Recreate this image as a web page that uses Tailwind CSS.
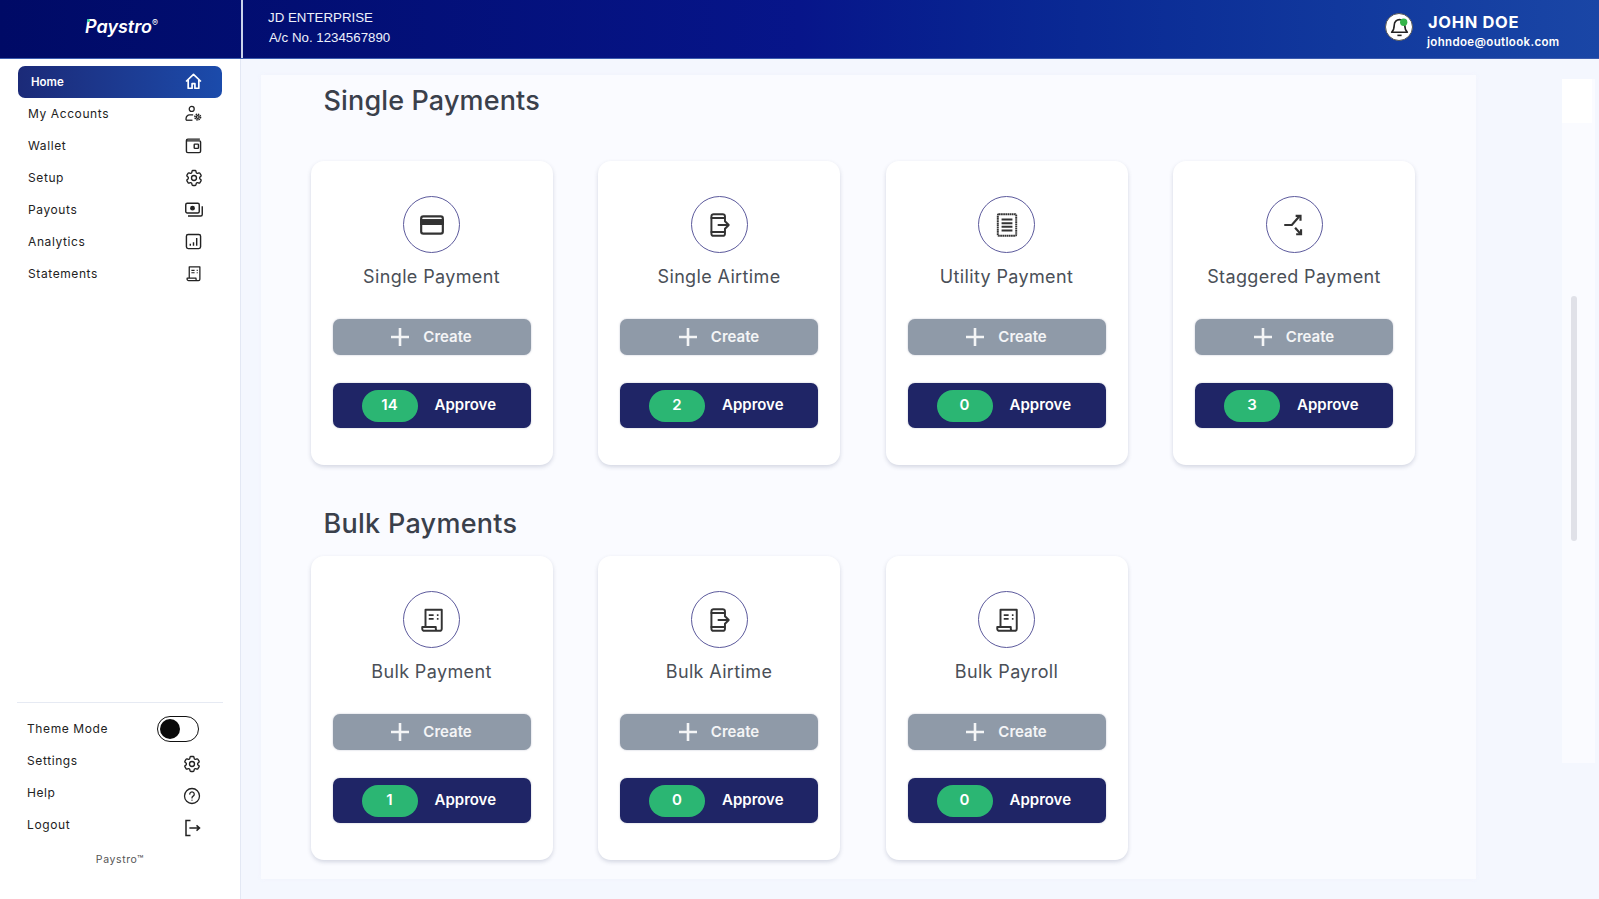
<!DOCTYPE html>
<html lang="en">
<head>
  <meta charset="utf-8">
  <title>Paystro</title>
  <script src="https://cdn.jsdelivr.net/npm/@tailwindcss/browser@4"></script>
</head>
<body class="w-[1599px] h-[899px] overflow-hidden bg-[#f4f7fe] font-['Inter',sans-serif]">

  <!-- Shared icons -->
  <svg class="hidden">
    <symbol id="i-gear" viewBox="0 0 24 24" fill="none" stroke="currentColor" stroke-width="1.6">
      <path d="M9.594 3.940c.090-.542.560-.940 1.110-.940h2.593c.550 0 1.020.398 1.110.940l.213 1.281c.063.374.313.686.645.870.074.040.147.083.220.127.325.196.720.257 1.075.124l1.217-.456a1.125 1.125 0 0 1 1.370.490l1.296 2.247a1.125 1.125 0 0 1-.260 1.431l-1.003.827c-.293.241-.438.613-.430.992a7.723 7.723 0 0 1 0 .255c-.008.378.137.750.430.991l1.004.827c.424.350.534.955.260 1.430l-1.298 2.247a1.125 1.125 0 0 1-1.369.491l-1.217-.456c-.355-.133-.750-.072-1.076.124a6.470 6.470 0 0 1-.220.128c-.331.183-.581.495-.644.869l-.213 1.281c-.090.543-.560.940-1.110.940h-2.594c-.550 0-1.019-.398-1.110-.940l-.213-1.281c-.062-.374-.312-.686-.644-.870a6.520 6.520 0 0 1-.220-.127c-.325-.196-.720-.257-1.076-.124l-1.217.456a1.125 1.125 0 0 1-1.369-.490l-1.297-2.247a1.125 1.125 0 0 1 .260-1.431l1.004-.827c.292-.240.437-.613.430-.991a6.932 6.932 0 0 1 0-.255c.007-.380-.138-.751-.430-.992l-1.004-.827a1.125 1.125 0 0 1-.260-1.430l1.297-2.247a1.125 1.125 0 0 1 1.370-.491l1.216.456c.356.133.751.072 1.076-.124.072-.044.146-.086.220-.128.332-.183.582-.495.644-.869l.214-1.280Z"/>
      <circle cx="12" cy="12" r="3"/>
    </symbol>
    <symbol id="i-scroll" viewBox="0 0 24 24" fill="none" stroke="currentColor" stroke-width="1.8" stroke-linejoin="round">
      <path d="M6 18V2.500h15V20a2 2 0 0 1-2 2H5a2 2 0 0 1-2-2v-1.500h12.500V20a2 2 0 0 0 2 2"/>
      <path d="M9 7.500h4.500M9 11h4.500M16.500 7.500H18M16.500 11H18" stroke-width="1.600"/>
    </symbol>
    <symbol id="i-phone" viewBox="0 0 24 24" fill="none" stroke="currentColor" stroke-width="1.8" stroke-linejoin="round" stroke-linecap="round">
      <path d="M17.500 8.500V4a2 2 0 0 0-2-2H7a2 2 0 0 0-2 2v16a2 2 0 0 0 2 2h8.500a2 2 0 0 0 2-2v-4.500"/>
      <path d="M5 5.500h12M5 18.500h12"/>
      <path d="M11.500 12H21M18 9l3 3-3 3"/>
    </symbol>
    <symbol id="i-plus" viewBox="0 0 18 18" fill="none" stroke="currentColor" stroke-width="2.600">
      <path d="M9 0v18M0 9h18"/>
    </symbol>
  </svg>

  <!-- Top bar -->
  <header class="h-[59px] flex items-stretch bg-gradient-to-r from-[#000a66] via-[#07158a] to-[#1a46a6] border-b border-[#3c5cae]">
    <div class="w-[241px] flex items-center justify-center pb-[5px] pl-[2px]">
      <span class="relative font-['Inter',sans-serif] italic font-semibold text-[18px] text-white leading-none">
        <span class="absolute left-[2px] top-[1px] w-[3px] h-[3px] rounded-full bg-[#2bd69a]"></span>Paystro<sup class="font-normal not-italic text-[9px] -top-[7px]">®</sup>
      </span>
    </div>
    <div class="w-[2px] bg-[#c9d3ea]"></div>
    <div class="pl-[25px] pt-[8px] font-['Liberation_Sans',sans-serif] text-[13.3px] leading-[20px] text-[#eef1fb]">
      <div>JD ENTERPRISE</div>
      <div class="pl-px">A/c No. 1234567890</div>
    </div>
    <div class="ml-auto w-[214px] flex items-center">
      <div class="w-[28px] h-[28px] rounded-full bg-white border border-[#555] flex items-center justify-center -mt-[4px]">
        <svg class="w-[21px] h-[21px]" viewBox="0 0 20 20" fill="none">
          <path d="M10 2.500a5 5 0 0 0-5 5c0 4-1 5.500-2.500 7h15c-1.500-1.500-2.500-3-2.500-7a5 5 0 0 0-5-5Z" stroke="#222" stroke-width="1.500" stroke-linejoin="round"/>
          <path d="M8 17.500h4" stroke="#222" stroke-width="1.500"/>
          <circle cx="14" cy="5" r="3.500" fill="#35b54a"/>
        </svg>
      </div>
      <div class="ml-[15px] text-white mt-[3px]">
        <div class="text-[16.5px] font-bold leading-[22px] tracking-[0.04em]">JOHN DOE</div>
        <div class="text-[11.5px] font-semibold leading-[18px] tracking-[0.03em] -ml-[1px]">johndoe@outlook.com</div>
      </div>
    </div>
  </header>

  <div class="flex h-[840px]">
    <!-- Sidebar -->
    <aside class="w-[241px] bg-white flex flex-col pt-[7px] pb-[32px] border-r border-[#e3e8f4] text-[#222] text-[12px] tracking-[0.05em]">
      <nav class="flex flex-col">
        <a class="mx-[18px] h-[32px] pl-[13px] pr-[20px] rounded-[7px] flex items-center justify-between bg-gradient-to-r from-[#1b2a78] to-[#1b4bab] text-white font-semibold text-[11.5px] tracking-normal">
          <span class="mt-[2px]">Home</span>
          <svg class="w-[17px] h-[17px] -mt-[2px]" viewBox="0 0 24 24" fill="none" stroke="currentColor" stroke-width="2.400" stroke-linejoin="round"><path d="M1.500 12 12 2l10.500 10M4.500 10v11.500h5.500V15h4v6.500h5.500V10"/></svg>
        </a>
        <a class="h-[32px] pl-[28px] pr-[38px] flex items-center justify-between">
          My Accounts
          <svg class="w-[17px] h-[17px] -mt-[2px]" viewBox="0 0 24 24" fill="none" stroke="currentColor" stroke-width="1.800"><circle cx="9.500" cy="5.500" r="3.500"/><path d="M1.500 21.500v-2.500a5 5 0 0 1 5-5h5"/><path d="M1.500 21.500h9"/><circle cx="18" cy="17" r="2"/><circle cx="18" cy="17" r="4" stroke-width="2.200" stroke-dasharray="2 1.100"/></svg>
        </a>
        <a class="h-[32px] pl-[28px] pr-[38px] flex items-center justify-between">
          Wallet
          <svg class="w-[17px] h-[17px] -mt-[2px]" viewBox="0 0 24 24" fill="none" stroke="currentColor" stroke-width="2"><path d="M21 3H4a2 2 0 0 0-2 2v15a2 2 0 0 0 2 2h16a2 2 0 0 0 2-2V7a1.500 1.500 0 0 0-1.500-1.500H3"/><rect x="13" y="10" width="6" height="6" rx="1"/></svg>
        </a>
        <a class="h-[32px] pl-[28px] pr-[36px] flex items-center justify-between">
          Setup
          <svg class="w-[20px] h-[20px]"><use href="#i-gear"/></svg>
        </a>
        <a class="h-[32px] pl-[28px] pr-[37px] flex items-center justify-between">
          Payouts
          <svg class="w-[18px] h-[18px]" viewBox="0 0 24 24" fill="none" stroke="currentColor" stroke-width="1.900"><rect x="1" y="3" width="18" height="13" rx="2"/><circle cx="10" cy="9.500" r="2.300" fill="currentColor"/><path d="M23 7v11a2 2 0 0 1-2 2H4"/></svg>
        </a>
        <a class="h-[32px] pl-[28px] pr-[38px] flex items-center justify-between">
          Analytics
          <svg class="w-[17px] h-[17px] -mt-[2px]" viewBox="0 0 24 24" fill="none" stroke="currentColor" stroke-width="2"><rect x="2" y="2" width="20" height="20" rx="2.500"/><path d="M7.500 18v-3M12 18v-5M16.500 18V7"/></svg>
        </a>
        <a class="h-[32px] pl-[28px] pr-[38px] flex items-center justify-between">
          Statements
          <svg class="w-[17px] h-[17px] -mt-[2px]"><use href="#i-scroll"/></svg>
        </a>
      </nav>

      <div class="mt-auto">
        <div class="mx-[17px] border-t border-[#e6eaf3] pt-[10px]">
        </div>
        <div class="h-[32px] pl-[27px] pr-[41px] flex items-center justify-between">
          Theme Mode
          <span class="w-[42px] h-[26px] rounded-full border-[1.5px] border-[#111] flex items-center pl-[2px]"><span class="w-[20px] h-[20px] rounded-full bg-[#0a0a0a]"></span></span>
        </div>
        <div class="h-[32px] pl-[27px] pr-[38px] flex justify-between pt-[7px]">
          Settings
          <svg class="w-[20px] h-[20px] mt-[2px]"><use href="#i-gear"/></svg>
        </div>
        <div class="h-[32px] pl-[27px] pr-[39px] flex justify-between pt-[7px]">
          Help
          <svg class="w-[18px] h-[18px] mt-[3px]" viewBox="0 0 24 24" fill="none" stroke="currentColor" stroke-width="1.700" stroke-linecap="round"><circle cx="12" cy="12" r="10"/><path d="M9 9.500a3 3 0 1 1 4.500 2.600c-1 .6-1.500 1.200-1.500 2.400"/><path d="M12 17.500v.1"/></svg>
        </div>
        <div class="h-[32px] pl-[27px] pr-[39px] flex justify-between pt-[7px]">
          Logout
          <svg class="w-[18px] h-[18px] mt-[3px]" viewBox="0 0 24 24" fill="none" stroke="currentColor" stroke-width="2"><path d="M10 2H4v20h6"/><path d="M8.500 12H22M18 8.500l4 3.500-4 3.500"/></svg>
        </div>
        <div class="mt-[12px] text-center text-[10.5px] text-[#555] leading-[14px]">Paystro™</div>
      </div>
    </aside>

    <!-- Main content -->
    <main class="flex-1 flex items-start">
      <div class="ml-[20px] mt-[16px] w-[1215px] h-[804px] bg-[#fafbff] pl-[49.5px] shadow-[0_0_4px_rgba(240,243,252,0.8)]">
        <h2 class="pl-[13px] pt-[8px] h-[86px] text-[27px] leading-[36px] font-medium text-[#3a404b] tracking-[0.005em]">Single Payments</h2>
        <div class="flex gap-[45.5px]">

          <div class="w-[242px] h-[304px] bg-white rounded-[13px] shadow-[0_2px_4px_rgba(60,70,110,0.2)] flex flex-col items-center pt-[35px]">
            <div class="w-[57px] h-[57px] rounded-full border-[1.5px] border-[#5c5a9c] flex items-center justify-center text-[#333]">
              <svg class="w-[26px] h-[26px]" viewBox="0 0 24 24" fill="none" stroke="currentColor" stroke-width="2"><rect x="2" y="4" width="20" height="16" rx="2"/><rect x="2" y="7.500" width="20" height="3.500" fill="currentColor"/></svg>
            </div>
            <div class="mt-[12px] text-[18px] leading-[24px] text-[#4a4f57] tracking-[0.02em]">Single Payment</div>
            <div class="mt-[30px] w-[198px] h-[36px] rounded-[7px] bg-[#8f9aa8] flex items-center justify-center gap-[14px] text-white/90 font-semibold text-[15px] shadow-[0_0_2px_rgba(60,70,110,0.35)]"><svg class="w-[18px] h-[18px]"><use href="#i-plus"/></svg>Create</div>
            <div class="mt-[28px] w-[198px] h-[45px] rounded-[7px] bg-[#1f2566] flex items-center pl-[29px] gap-[17px] text-white font-semibold text-[15px] shadow-[0_0_2px_rgba(60,70,110,0.35)]"><span class="w-[56px] h-[32px] rounded-full bg-[#2bb673] flex items-center justify-center">14</span>Approve</div>
          </div>

          <div class="w-[242px] h-[304px] bg-white rounded-[13px] shadow-[0_2px_4px_rgba(60,70,110,0.2)] flex flex-col items-center pt-[35px]">
            <div class="w-[57px] h-[57px] rounded-full border-[1.5px] border-[#5c5a9c] flex items-center justify-center text-[#333]">
              <svg class="w-[26px] h-[26px]"><use href="#i-phone"/></svg>
            </div>
            <div class="mt-[12px] text-[18px] leading-[24px] text-[#4a4f57] tracking-[0.02em]">Single Airtime</div>
            <div class="mt-[30px] w-[198px] h-[36px] rounded-[7px] bg-[#8f9aa8] flex items-center justify-center gap-[14px] text-white/90 font-semibold text-[15px] shadow-[0_0_2px_rgba(60,70,110,0.35)]"><svg class="w-[18px] h-[18px]"><use href="#i-plus"/></svg>Create</div>
            <div class="mt-[28px] w-[198px] h-[45px] rounded-[7px] bg-[#1f2566] flex items-center pl-[29px] gap-[17px] text-white font-semibold text-[15px] shadow-[0_0_2px_rgba(60,70,110,0.35)]"><span class="w-[56px] h-[32px] rounded-full bg-[#2bb673] flex items-center justify-center">2</span>Approve</div>
          </div>

          <div class="w-[242px] h-[304px] bg-white rounded-[13px] shadow-[0_2px_4px_rgba(60,70,110,0.2)] flex flex-col items-center pt-[35px]">
            <div class="w-[57px] h-[57px] rounded-full border-[1.5px] border-[#5c5a9c] flex items-center justify-center text-[#333]">
              <svg class="w-[26px] h-[26px]" viewBox="0 0 24 24" fill="none" stroke="currentColor" stroke-width="1.800"><rect x="3.500" y="2" width="17" height="20" rx="1" stroke-dasharray="1.600 .4"/><path d="M7 7h10M7 10.300h10M7 13.600h10M7 17h10"/></svg>
            </div>
            <div class="mt-[12px] text-[18px] leading-[24px] text-[#4a4f57] tracking-[0.02em]">Utility Payment</div>
            <div class="mt-[30px] w-[198px] h-[36px] rounded-[7px] bg-[#8f9aa8] flex items-center justify-center gap-[14px] text-white/90 font-semibold text-[15px] shadow-[0_0_2px_rgba(60,70,110,0.35)]"><svg class="w-[18px] h-[18px]"><use href="#i-plus"/></svg>Create</div>
            <div class="mt-[28px] w-[198px] h-[45px] rounded-[7px] bg-[#1f2566] flex items-center pl-[29px] gap-[17px] text-white font-semibold text-[15px] shadow-[0_0_2px_rgba(60,70,110,0.35)]"><span class="w-[56px] h-[32px] rounded-full bg-[#2bb673] flex items-center justify-center">0</span>Approve</div>
          </div>

          <div class="w-[242px] h-[304px] bg-white rounded-[13px] shadow-[0_2px_4px_rgba(60,70,110,0.2)] flex flex-col items-center pt-[35px]">
            <div class="w-[57px] h-[57px] rounded-full border-[1.5px] border-[#5c5a9c] flex items-center justify-center text-[#333]">
              <svg class="w-[26px] h-[26px]" viewBox="0 0 24 24" fill="none" stroke="currentColor" stroke-width="2"><path d="M3 12h7l7-8"/><path d="M13.500 3.500H18V8" /><path d="M13 14.500l5 5.500"/><path d="M14 20.500h4.500V16"/></svg>
            </div>
            <div class="mt-[12px] text-[18px] leading-[24px] text-[#4a4f57] tracking-[0.02em]">Staggered Payment</div>
            <div class="mt-[30px] w-[198px] h-[36px] rounded-[7px] bg-[#8f9aa8] flex items-center justify-center gap-[14px] text-white/90 font-semibold text-[15px] shadow-[0_0_2px_rgba(60,70,110,0.35)]"><svg class="w-[18px] h-[18px]"><use href="#i-plus"/></svg>Create</div>
            <div class="mt-[28px] w-[198px] h-[45px] rounded-[7px] bg-[#1f2566] flex items-center pl-[29px] gap-[17px] text-white font-semibold text-[15px] shadow-[0_0_2px_rgba(60,70,110,0.35)]"><span class="w-[56px] h-[32px] rounded-full bg-[#2bb673] flex items-center justify-center">3</span>Approve</div>
          </div>
        </div>

        <h2 class="pl-[13px] mt-[41px] h-[50px] text-[27px] leading-[36px] font-medium text-[#3a404b] tracking-[0.01em]">Bulk Payments</h2>
        <div class="flex gap-[45.5px]">

          <div class="w-[242px] h-[304px] bg-white rounded-[13px] shadow-[0_2px_4px_rgba(60,70,110,0.2)] flex flex-col items-center pt-[35px]">
            <div class="w-[57px] h-[57px] rounded-full border-[1.5px] border-[#5c5a9c] flex items-center justify-center text-[#333]">
              <svg class="w-[26px] h-[26px]"><use href="#i-scroll"/></svg>
            </div>
            <div class="mt-[12px] text-[18px] leading-[24px] text-[#4a4f57] tracking-[0.02em]">Bulk Payment</div>
            <div class="mt-[30px] w-[198px] h-[36px] rounded-[7px] bg-[#8f9aa8] flex items-center justify-center gap-[14px] text-white/90 font-semibold text-[15px] shadow-[0_0_2px_rgba(60,70,110,0.35)]"><svg class="w-[18px] h-[18px]"><use href="#i-plus"/></svg>Create</div>
            <div class="mt-[28px] w-[198px] h-[45px] rounded-[7px] bg-[#1f2566] flex items-center pl-[29px] gap-[17px] text-white font-semibold text-[15px] shadow-[0_0_2px_rgba(60,70,110,0.35)]"><span class="w-[56px] h-[32px] rounded-full bg-[#2bb673] flex items-center justify-center">1</span>Approve</div>
          </div>

          <div class="w-[242px] h-[304px] bg-white rounded-[13px] shadow-[0_2px_4px_rgba(60,70,110,0.2)] flex flex-col items-center pt-[35px]">
            <div class="w-[57px] h-[57px] rounded-full border-[1.5px] border-[#5c5a9c] flex items-center justify-center text-[#333]">
              <svg class="w-[26px] h-[26px]"><use href="#i-phone"/></svg>
            </div>
            <div class="mt-[12px] text-[18px] leading-[24px] text-[#4a4f57] tracking-[0.02em]">Bulk Airtime</div>
            <div class="mt-[30px] w-[198px] h-[36px] rounded-[7px] bg-[#8f9aa8] flex items-center justify-center gap-[14px] text-white/90 font-semibold text-[15px] shadow-[0_0_2px_rgba(60,70,110,0.35)]"><svg class="w-[18px] h-[18px]"><use href="#i-plus"/></svg>Create</div>
            <div class="mt-[28px] w-[198px] h-[45px] rounded-[7px] bg-[#1f2566] flex items-center pl-[29px] gap-[17px] text-white font-semibold text-[15px] shadow-[0_0_2px_rgba(60,70,110,0.35)]"><span class="w-[56px] h-[32px] rounded-full bg-[#2bb673] flex items-center justify-center">0</span>Approve</div>
          </div>

          <div class="w-[242px] h-[304px] bg-white rounded-[13px] shadow-[0_2px_4px_rgba(60,70,110,0.2)] flex flex-col items-center pt-[35px]">
            <div class="w-[57px] h-[57px] rounded-full border-[1.5px] border-[#5c5a9c] flex items-center justify-center text-[#333]">
              <svg class="w-[26px] h-[26px]"><use href="#i-scroll"/></svg>
            </div>
            <div class="mt-[12px] text-[18px] leading-[24px] text-[#4a4f57] tracking-[0.02em]">Bulk Payroll</div>
            <div class="mt-[30px] w-[198px] h-[36px] rounded-[7px] bg-[#8f9aa8] flex items-center justify-center gap-[14px] text-white/90 font-semibold text-[15px] shadow-[0_0_2px_rgba(60,70,110,0.35)]"><svg class="w-[18px] h-[18px]"><use href="#i-plus"/></svg>Create</div>
            <div class="mt-[28px] w-[198px] h-[45px] rounded-[7px] bg-[#1f2566] flex items-center pl-[29px] gap-[17px] text-white font-semibold text-[15px] shadow-[0_0_2px_rgba(60,70,110,0.35)]"><span class="w-[56px] h-[32px] rounded-full bg-[#2bb673] flex items-center justify-center">0</span>Approve</div>
          </div>
        </div>
      </div>

      <!-- Right rail with scrollbar -->
      <div class="ml-auto mt-[20px] mr-[4px] w-[33px] h-[684px] bg-[#fafbff]">
        <div class="w-[30px] h-[44px] bg-white"></div>
        <div class="mt-[173px] ml-[9px] w-[6px] h-[245px] rounded-full bg-[#e0e1e8]"></div>
      </div>
    </main>
  </div>
</body>
</html>
